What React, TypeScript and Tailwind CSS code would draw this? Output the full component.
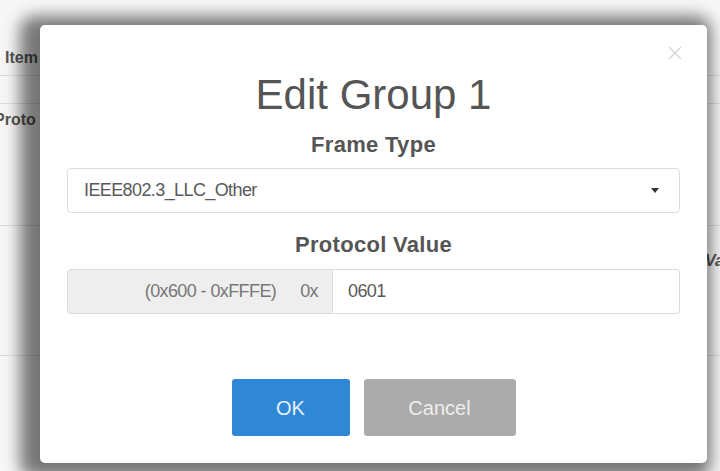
import React from "react";

export default function App() {
  return (
    <div className="relative w-[720px] h-[471px] overflow-hidden bg-[#f7f7f7]" style={{ fontFamily: '"Liberation Sans", Arial, sans-serif' }}>
      {/* background page */}
      <div className="flex flex-col text-[#555]">
        <div className="h-[40px]" />
        <div className="h-[36px] flex items-center pl-[5px] text-[16px] font-bold border-b border-[#ddd]">Item</div>
        <div className="h-[28px] border-b border-[#ddd]" />
        <div className="h-[32px] flex items-center -ml-[6px] text-[16px] font-bold">Proto</div>
        <div className="h-[90px] border-b border-[#ddd]" />
        <div className="h-[70px] flex items-center justify-end text-[16px] italic font-bold -mr-[4px]">Va</div>
        <div className="h-[60px] border-b border-[#ddd]" />
      </div>

      {/* modal */}
      <div className="absolute left-[40px] top-[25px] w-[667px] h-[438px] bg-white rounded-[5px] shadow-[-8px_3px_16px_12px_rgba(0,0,0,0.52)] flex flex-col items-center">
        <button className="absolute right-[24px] top-[20px] text-[#d4d4d4]">
          <svg width="16" height="16" viewBox="0 0 16 16" fill="none" stroke="currentColor" strokeWidth="1.3">
            <path d="M2 2L14 14M14 2L2 14" />
          </svg>
        </button>
        <div className="mt-[45px] text-[42px] leading-[50px] text-[#555]">Edit Group 1</div>
        <div className="mt-[12px] text-[22px] leading-[26px] font-bold text-[#555] tracking-[0.3px]">Frame Type</div>
        <div className="mt-[10px] w-[613px] h-[45px] border border-[#dcdcdc] rounded-[4px] flex items-center justify-between pl-[16px] pr-[20px]">
          <span className="text-[18px] text-[#5a5a5a] tracking-[-0.6px]">IEEE802.3_LLC_Other</span>
          <svg width="8" height="5" viewBox="0 0 8 5"><path d="M0 0H8L4 5Z" fill="#333" /></svg>
        </div>
        <div className="mt-[19px] text-[22px] leading-[26px] font-bold text-[#555] tracking-[0.3px]">Protocol Value</div>
        <div className="mt-[11px] w-[613px] h-[45px] flex">
          <div className="w-[266px] h-full bg-[#eeeeee] border border-[#dcdcdc] rounded-l-[4px] flex items-center justify-end pr-[14px] text-[18px] text-[#777] tracking-[-0.6px]">
            <span>(0x600 - 0xFFFE)</span>
            <span className="ml-[24px]">0x</span>
          </div>
          <div className="flex-1 h-full border border-l-0 border-[#dcdcdc] rounded-r-[4px] flex items-center pl-[15px] text-[18px] text-[#5a5a5a] tracking-[-0.6px]">
            0601
          </div>
        </div>
        <div className="mt-[65px] flex gap-[14px]">
          <button className="w-[118px] h-[57px] bg-[#2f87d6] rounded-[3px] text-[20px] text-[#e8f1fb]">OK</button>
          <button className="w-[152px] h-[57px] bg-[#ababab] rounded-[3px] text-[20px] text-[#eeeeee]">Cancel</button>
        </div>
      </div>
    </div>
  );
}
